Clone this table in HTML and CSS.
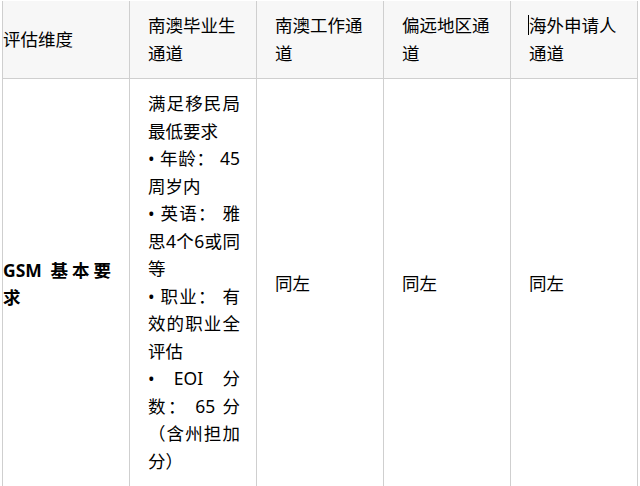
FILE: index.html
```html
<!DOCTYPE html>
<html lang="zh-CN">
<head>
<meta charset="utf-8">
<title>评估维度</title>
<link rel="stylesheet" href="styles.css">
</head>
<body>
<table class="grid">
  <colgroup>
    <col class="c"><col class="c"><col class="c"><col class="c"><col class="c">
  </colgroup>
  <thead>
    <tr>
      <th class="first">评估维度</th>
      <th>南澳毕业生通道</th>
      <th>南澳工作通道</th>
      <th>偏远地区通道</th>
      <th><span class="caret"></span>海外申请人通道</th>
    </tr>
  </thead>
  <tbody>
    <tr>
      <td class="first"><strong>GSM 基本要求</strong></td>
      <td class="req">
        <p>满足移民局最低要求</p>
        <p>• 年龄： 45 周岁内</p>
        <p>• 英语： 雅思4个6或同等</p>
        <p>• 职业： 有效的职业全评估</p>
        <p>• EOI 分数： 65 分（含州担加分）</p>
      </td>
      <td>同左</td>
      <td>同左</td>
      <td>同左</td>
    </tr>
  </tbody>
</table>
</body>
</html>
```
FILE: styles.css
```css
html, body {
  margin: 0;
  padding: 0;
  background: #ffffff;
}

body {
  font-family: "Noto Sans", "Noto Sans CJK SC", "Liberation Sans", sans-serif;
  font-size: 17.5px;
  line-height: 27.5px;
  color: #000000;
}

.grid {
  border-collapse: collapse;
  table-layout: fixed;
  width: 636px;
  margin: 1px 0 0 2px;
}

.grid .c {
  width: 127px;
}

.grid th,
.grid td {
  border: 1px solid #cfcfcf;
  padding: 11px 18px;
  vertical-align: middle;
  text-align: justify;
  font-weight: normal;
}

.grid th {
  background: #f7f7f7;
  border-top: none;
  text-align: left;
}

.grid .first {
  padding-left: 0;
}

.grid .req {
  padding-right: 16px;
  padding-bottom: 14px;
}

.grid strong {
  font-weight: bold;
}

.req p {
  margin: 0;
}

.caret {
  display: inline-block;
  width: 0;
  height: 20px;
  border-left: 1px solid #000000;
  vertical-align: -3px;
  margin-left: -1px;
}
```
